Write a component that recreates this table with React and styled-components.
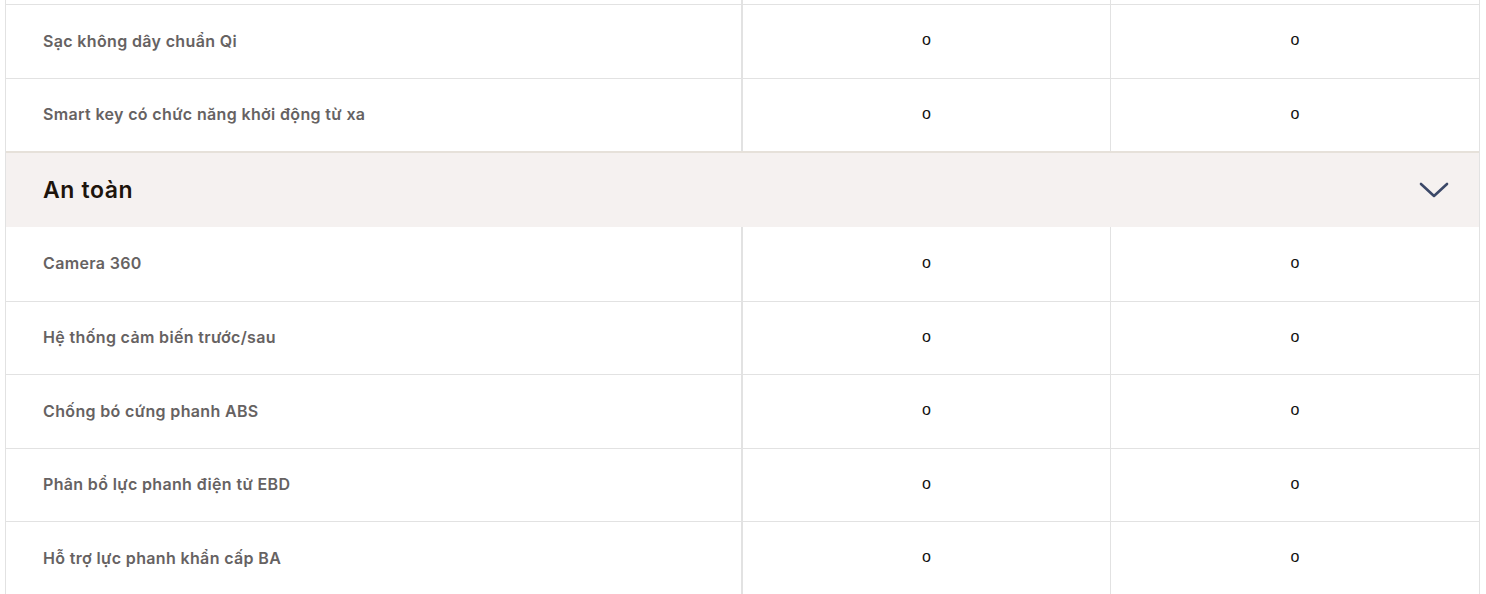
import styled, { createGlobalStyle } from "styled-components";

const GlobalStyle = createGlobalStyle`
  html, body {
    margin: 0;
    padding: 0;
    background: #fff;
  }
  body {
    font-family: "Inter", "Liberation Sans", sans-serif;
    overflow: hidden;
  }
`;

const groups = [
  {
    title: null,
    items: ["Sạc không dây chuẩn Qi", "Smart key có chức năng khởi động từ xa"],
  },
  {
    title: "An toàn",
    items: [
      "Camera 360",
      "Hệ thống cảm biến trước/sau",
      "Chống bó cứng phanh ABS",
      "Phân bổ lực phanh điện tử EBD",
      "Hỗ trợ lực phanh khẩn cấp BA",
    ],
  },
];

function Chevron() {
  return (
    <svg width="30" height="18" viewBox="0 0 30 18" fill="none">
      <path
        d="M2 3 L15 15 L28 3"
        stroke="#3b4868"
        strokeWidth="2.6"
        strokeLinecap="round"
        strokeLinejoin="round"
      />
    </svg>
  );
}

export default function App() {
  return (
    <>
      <GlobalStyle />
      <Page>
        <Table>
          <Row $spacer>
            <NameCell />
            <ValueCell $wide />
            <ValueCell />
          </Row>
          {groups.map((g, gi) => (
            <Group key={gi}>
              {g.title && (
                <GroupHeader>
                  <GroupTitle>{g.title}</GroupTitle>
                  <Chevron />
                </GroupHeader>
              )}
              {g.items.map((item, i) => (
                <Row key={item} $noTop={g.title && i === 0}>
                  <NameCell>{item}</NameCell>
                  <ValueCell $wide>o</ValueCell>
                  <ValueCell>o</ValueCell>
                </Row>
              ))}
            </Group>
          ))}
        </Table>
      </Page>
    </>
  );
}

const Page = styled.div`
  padding: 0 6px 0 5px;
  height: 594px;
  overflow: hidden;
`;

const Table = styled.div`
  border-left: 1px solid #e2e2e2;
  border-right: 1px solid #e2e2e2;
`;

const Group = styled.div`
  display: flex;
  flex-direction: column;
`;

const Row = styled.div`
  display: grid;
  grid-template-columns: 737px 368px 368px;
  box-sizing: border-box;
  height: ${(p) => (p.$spacer ? "4px" : "73.5px")};
  border-top: ${(p) => (p.$spacer || p.$noTop ? "none" : "1px solid #e2e2e2")};
`;

const NameCell = styled.div`
  box-sizing: border-box;
  border-right: 2px solid #e2e2e2;
  display: flex;
  align-items: center;
  padding-left: 37px;
  padding-bottom: 1px;
  font-size: 16px;
  font-weight: 600;
  color: #666262;
  letter-spacing: 0.35px;
`;

const ValueCell = styled.div`
  box-sizing: border-box;
  border-right: ${(p) => (p.$wide ? "1px solid #e2e2e2" : "none")};
  display: flex;
  align-items: center;
  justify-content: center;
  padding-bottom: 2px;
  font-family: "Liberation Sans", sans-serif;
  font-size: 16px;
  color: #111;
`;

const GroupHeader = styled.div`
  box-sizing: border-box;
  height: 76px;
  border-top: 2px solid #e6e1da;
  background: #f5f1f0;
  display: flex;
  align-items: center;
  justify-content: space-between;
  padding: 0 30px 0 37px;
`;

const GroupTitle = styled.h3`
  margin: 0;
  font-size: 23px;
  font-weight: 600;
  color: #1d140c;
  letter-spacing: 0.6px;
`;
